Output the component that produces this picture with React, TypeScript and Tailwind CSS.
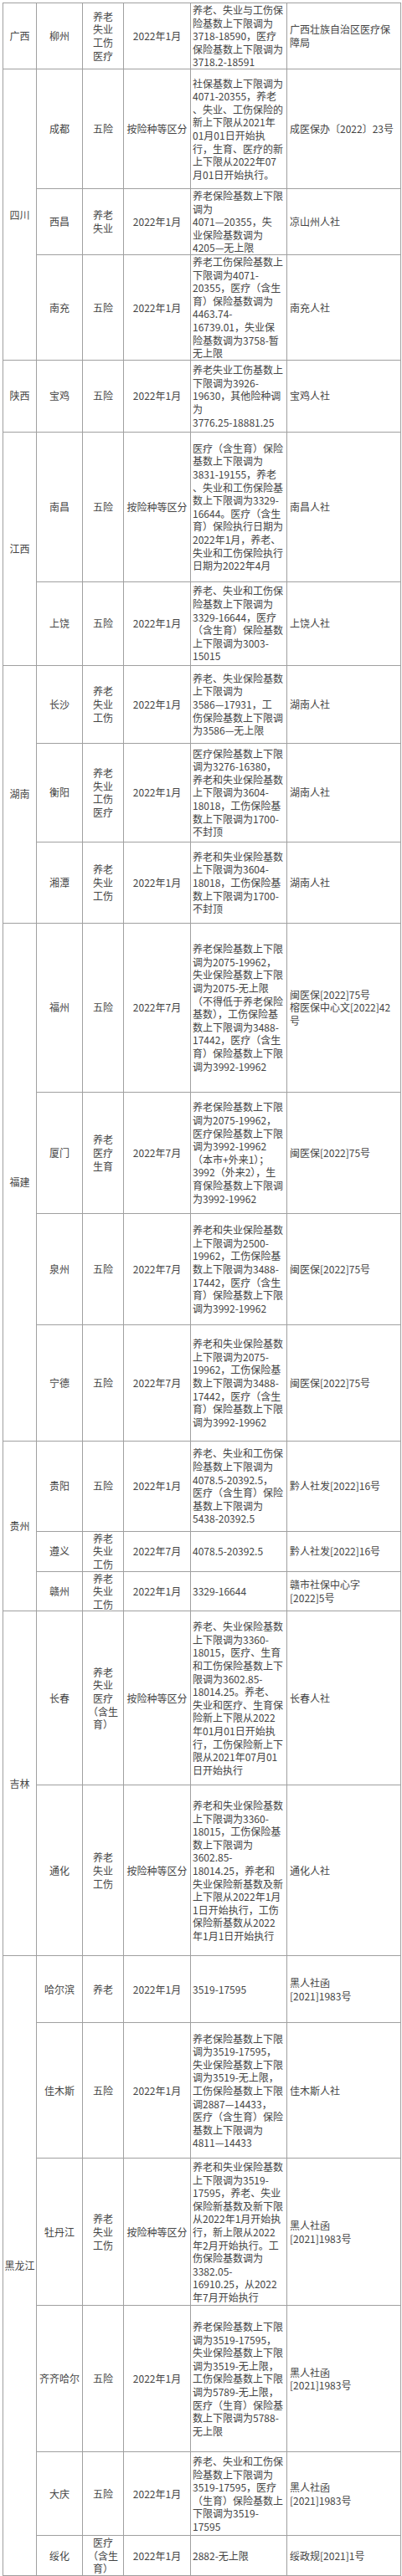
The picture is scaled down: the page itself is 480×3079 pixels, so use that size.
type Row = {
  city: string;
  kinds: string[];
  date: string;
  detail: string[];
  src: string[];
  h: string;
};

type Group = { p: string; rows: Row[] };

const groups: Group[] = [
  {
    p: "广西",
    rows: [
      {
        city: "柳州",
        kinds: ["养老", "失业", "工伤", "医疗"],
        date: "2022年1月",
        detail: ["养老、失业与工伤保", "险基数上下限调为", "3718-18590，医疗", "保险基数上下限调为", "3718.2-18591"],
        src: ["广西壮族自治区医疗保", "障局"],
        h: "h-[78px]",
      },
    ],
  },
  {
    p: "四川",
    rows: [
      {
        city: "成都",
        kinds: ["五险"],
        date: "按险种等区分",
        detail: [
          "社保基数上下限调为",
          "4071-20355，养老",
          "、失业、工伤保险的",
          "新上下限从2021年",
          "01月01日开始执",
          "行，生育、医疗的新",
          "上下限从2022年07",
          "月01日开始执行。",
        ],
        src: ["成医保办〔2022〕23号"],
        h: "h-[143px]",
      },
      {
        city: "西昌",
        kinds: ["养老", "失业"],
        date: "2022年1月",
        detail: ["养老保险基数上下限", "调为", "4071—20355，失", "业保险基数调为", "4205—无上限"],
        src: ["凉山州人社"],
        h: "h-[79px]",
      },
      {
        city: "南充",
        kinds: ["五险"],
        date: "2022年1月",
        detail: [
          "养老工伤保险基数上",
          "下限调为4071-",
          "20355，医疗（含生",
          "育）保险基数调为",
          "4463.74-",
          "16739.01，失业保",
          "险基数调为3758-暂",
          "无上限",
        ],
        src: ["南充人社"],
        h: "h-[125px]",
      },
    ],
  },
  {
    p: "陕西",
    rows: [
      {
        city: "宝鸡",
        kinds: ["五险"],
        date: "2022年1月",
        detail: ["养老失业工伤基数上", "下限调为3926-", "19630，其他险种调", "为", "3776.25-18881.25"],
        src: ["宝鸡人社"],
        h: "h-[86px]",
      },
    ],
  },
  {
    p: "江西",
    rows: [
      {
        city: "南昌",
        kinds: ["五险"],
        date: "按险种等区分",
        detail: [
          "医疗（含生育）保险",
          "基数上下限调为",
          "3831-19155，养老",
          "、失业和工伤保险基",
          "数上下限调为3329-",
          "16644。医疗（含生",
          "育）保险执行日期为",
          "2022年1月，养老、",
          "失业和工伤保险执行",
          "日期为2022年4月",
        ],
        src: ["南昌人社"],
        h: "h-[179px]",
      },
      {
        city: "上饶",
        kinds: ["五险"],
        date: "2022年1月",
        detail: ["养老、失业和工伤保", "险基数上下限调为", "3329-16644，医疗", "（含生育）保险基数", "上下限调为3003-", "15015"],
        src: ["上饶人社"],
        h: "h-[100px]",
      },
    ],
  },
  {
    p: "湖南",
    rows: [
      {
        city: "长沙",
        kinds: ["养老", "失业", "工伤"],
        date: "2022年1月",
        detail: ["养老、失业保险基数", "上下限调为", "3586—17931，工", "伤保险基数上下限调", "为3586—无上限"],
        src: ["湖南人社"],
        h: "h-[93px]",
      },
      {
        city: "衡阳",
        kinds: ["养老", "失业", "工伤", "医疗"],
        date: "2022年1月",
        detail: [
          "医疗保险基数上下限",
          "调为3276-16380，",
          "养老和失业保险基数",
          "上下限调为3604-",
          "18018，工伤保险基",
          "数上下限调为1700-",
          "不封顶",
        ],
        src: ["湖南人社"],
        h: "h-[118px]",
      },
      {
        city: "湘潭",
        kinds: ["养老", "失业", "工伤"],
        date: "2022年1月",
        detail: ["养老和失业保险基数", "上下限调为3604-", "18018，工伤保险基", "数上下限调为1700-", "不封顶"],
        src: ["湖南人社"],
        h: "h-[97px]",
      },
    ],
  },
  {
    p: "福建",
    rows: [
      {
        city: "福州",
        kinds: ["五险"],
        date: "2022年7月",
        detail: [
          "养老保险基数上下限",
          "调为2075-19962，",
          "失业保险基数上下限",
          "调为2075-无上限",
          "（不得低于养老保险",
          "基数），工伤保险基",
          "数上下限调为3488-",
          "17442，医疗（含生",
          "育）保险基数上下限",
          "调为3992-19962",
        ],
        src: ["闽医保[2022]75号", "榕医保中心文[2022]42", "号"],
        h: "h-[202px]",
      },
      {
        city: "厦门",
        kinds: ["养老", "医疗", "生育"],
        date: "2022年7月",
        detail: [
          "养老保险基数上下限",
          "调为2075-19962，",
          "医疗保险基数上下限",
          "调为3992-19962",
          "（本市+外来1）；",
          "3992（外来2），生",
          "育保险基数上下限调",
          "为3992-19962",
        ],
        src: ["闽医保[2022]75号"],
        h: "h-[145px]",
      },
      {
        city: "泉州",
        kinds: ["五险"],
        date: "2022年7月",
        detail: [
          "养老和失业保险基数",
          "上下限调为2500-",
          "19962，工伤保险基",
          "数上下限调为3488-",
          "17442，医疗（含生",
          "育）保险基数上下限",
          "调为3992-19962",
        ],
        src: ["闽医保[2022]75号"],
        h: "h-[133px]",
      },
      {
        city: "宁德",
        kinds: ["五险"],
        date: "2022年7月",
        detail: [
          "养老和失业保险基数",
          "上下限调为2075-",
          "19962，工伤保险基",
          "数上下限调为3488-",
          "17442，医疗（含生",
          "育）保险基数上下限",
          "调为3992-19962",
        ],
        src: ["闽医保[2022]75号"],
        h: "h-[139px]",
      },
    ],
  },
  {
    p: "贵州",
    rows: [
      {
        city: "贵阳",
        kinds: ["五险"],
        date: "2022年1月",
        detail: ["养老、失业和工伤保", "险基数上下限调为", "4078.5-20392.5，", "医疗（含生育）保险", "基数上下限调为", "5438-20392.5"],
        src: ["黔人社发[2022]16号"],
        h: "h-[108px]",
      },
      {
        city: "遵义",
        kinds: ["养老", "失业", "工伤"],
        date: "2022年7月",
        detail: ["4078.5-20392.5"],
        src: ["黔人社发[2022]16号"],
        h: "h-[47px]",
      },
      {
        city: "赣州",
        kinds: ["养老", "失业", "工伤"],
        date: "2022年1月",
        detail: ["3329-16644"],
        src: ["赣市社保中心字", "[2022]5号"],
        h: "h-[47px]",
      },
    ],
  },
  {
    p: "吉林",
    rows: [
      {
        city: "长春",
        kinds: ["养老", "失业", "医疗", "（含生", "育）"],
        date: "按险种等区分",
        detail: [
          "养老、失业保险基数",
          "上下限调为3360-",
          "18015，医疗、生育",
          "和工伤保险基数上下",
          "限调为3602.85-",
          "18014.25。养老、",
          "失业和医疗、生育保",
          "险新上下限从2022",
          "年01月01日开始执",
          "行，工伤保险新上下",
          "限从2021年07月01",
          "日开始执行",
        ],
        src: ["长春人社"],
        h: "h-[208px]",
      },
      {
        city: "通化",
        kinds: ["养老", "失业", "工伤"],
        date: "按险种等区分",
        detail: [
          "养老和失业保险基数",
          "上下限调为3360-",
          "18015，工伤保险基",
          "数上下限调为",
          "3602.85-",
          "18014.25，养老和",
          "失业保险新基数及新",
          "上下限从2022年1月",
          "1日开始执行，工伤",
          "保险新基数从2022",
          "年1月1日开始执行",
        ],
        src: ["通化人社"],
        h: "h-[204px]",
      },
    ],
  },
  {
    p: "黑龙江",
    rows: [
      {
        city: "哈尔滨",
        kinds: ["养老"],
        date: "2022年1月",
        detail: ["3519-17595"],
        src: ["黑人社函", "[2021]1983号"],
        h: "h-[80px]",
      },
      {
        city: "佳木斯",
        kinds: ["五险"],
        date: "2022年1月",
        detail: [
          "养老保险基数上下限",
          "调为3519-17595，",
          "失业保险基数上下限",
          "调为3519-无上限，",
          "工伤保险基数上下限",
          "调2887—14433，",
          "医疗（含生育）保险",
          "基数上下限调为",
          "4811—14433",
        ],
        src: ["佳木斯人社"],
        h: "h-[162px]",
      },
      {
        city: "牡丹江",
        kinds: ["养老", "失业", "工伤"],
        date: "按险种等区分",
        detail: [
          "养老和失业保险基数",
          "上下限调为3519-",
          "17595，养老、失业",
          "保险新基数及新下限",
          "从2022年1月开始执",
          "行，新上限从2022",
          "年2月开始执行。工",
          "伤保险基数调为",
          "3382.05-",
          "16910.25，从2022",
          "年7月开始执行",
        ],
        src: ["黑人社函", "[2021]1983号"],
        h: "h-[176px]",
      },
      {
        city: "齐齐哈尔",
        kinds: ["五险"],
        date: "2022年1月",
        detail: [
          "养老保险基数上下限",
          "调为3519-17595，",
          "失业保险基数上下限",
          "调为3519-无上限，",
          "工伤保险基数上下限",
          "调为5789-无上限，",
          "医疗（生育）保险基",
          "数上下限调为5788-",
          "无上限",
        ],
        src: ["黑人社函", "[2021]1983号"],
        h: "h-[175px]",
      },
      {
        city: "大庆",
        kinds: ["五险"],
        date: "2022年1月",
        detail: ["养老、失业和工伤保", "险基数上下限调为", "3519-17595，医疗", "（生育）保险基数上", "下限调为3519-", "17595"],
        src: ["黑人社函", "[2021]1983号"],
        h: "h-[100px]",
      },
      {
        city: "绥化",
        kinds: ["医疗", "（含生", "育）"],
        date: "2022年1月",
        detail: ["2882-无上限"],
        src: ["绥政规[2021]1号"],
        h: "h-[46px]",
      },
    ],
  },
];

const cell = "border border-[#a0a0a0] p-0 align-middle";

function Lines({ items }: { items: string[] }) {
  return (
    <div className="flex flex-col">
      {items.map((t, i) => (
        <span key={i} className="block whitespace-nowrap">
          {t}
        </span>
      ))}
    </div>
  );
}

export default function App() {
  return (
    <div
      className="w-[480px] h-[3079px] bg-white pt-[3px] pl-[3px] text-[12px] leading-[15.6px] text-[#444]"
      style={{ fontFamily: '"Noto Sans CJK SC", "Noto Sans", sans-serif' }}
    >
      <table className="table-fixed border-collapse w-[475px]">
        <colgroup>
          <col className="w-[40px]" />
          <col className="w-[55px]" />
          <col className="w-[49px]" />
          <col className="w-[80px]" />
          <col className="w-[115px]" />
          <col className="w-[136px]" />
        </colgroup>
        <tbody>
          {groups.map((g) =>
            g.rows.map((r, i) => (
              <tr key={g.p + r.city} className={r.h}>
                {i === 0 && (
                  <td rowSpan={g.rows.length} className={`${cell} text-center whitespace-nowrap`}>
                    {g.p}
                  </td>
                )}
                <td className={`${cell} text-center whitespace-nowrap`}>{r.city}</td>
                <td className={`${cell} text-center`}>
                  <Lines items={r.kinds} />
                </td>
                <td className={`${cell} text-center whitespace-nowrap`}>{r.date}</td>
                <td className={`${cell} pl-[2px]`}>
                  <Lines items={r.detail} />
                </td>
                <td className={`${cell} pl-[3px]`}>
                  <Lines items={r.src} />
                </td>
              </tr>
            ))
          )}
        </tbody>
      </table>
    </div>
  );
}
